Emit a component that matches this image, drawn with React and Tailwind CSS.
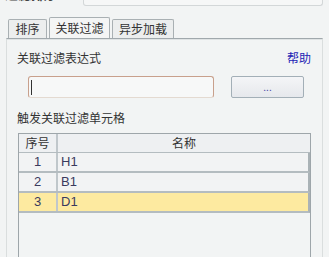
import React from "react";

const rows = [
  { id: 1, name: "H1" },
  { id: 2, name: "B1" },
  { id: 3, name: "D1", selected: true },
];

export default function App() {
  return (
    <div
      className="w-[329px] h-[257px] overflow-hidden bg-[#f2f4f4] text-[12px] text-[#333]"
      style={{ fontFamily: '"Noto Sans CJK SC", "Liberation Sans", sans-serif' }}
    >
      {/* clipped header row */}
      <div className="flex h-[6px] overflow-hidden">
        <div className="w-[83px] pl-[5px] -mt-[14px] leading-[16px] text-[13px] font-bold text-[#444]">
          过滤排序
        </div>
        <div className="w-[240px] h-[6px] border border-t-0 border-[#d3d7d8] rounded-b-[3px] bg-[#f6f7f7]" />
      </div>

      {/* tabs */}
      <div className="mt-[11px] flex items-end gap-[2px] pl-[8px] h-[21px]">
        <div className="w-[39px] h-[19px] flex items-center justify-center border border-b-0 border-[#a9b0b3] rounded-t-[2px] bg-[#eceeee]">
          排序
        </div>
        <div className="w-[61px] h-[21px] flex items-center justify-center border border-b-0 border-[#a9b0b3] rounded-t-[2px] bg-[#f4f5f5]">
          关联过滤
        </div>
        <div className="w-[62px] h-[19px] flex items-center justify-center border border-b-0 border-[#a9b0b3] rounded-t-[2px] bg-[#eceeee]">
          异步加载
        </div>
      </div>

      {/* panel */}
      <div className="ml-[6px] w-[317px] h-[230px] border-t border-t-[#a0a8ac] border-x border-x-[#dadede] shadow-[inset_0_1px_0_#dfe3e4] pt-[11px] pl-[10px] pr-[11px]">
        <div className="flex justify-between leading-[16px]">
          <span>关联过滤表达式</span>
          <span className="text-[#2424b4]">帮助</span>
        </div>

        <div className="mt-[10px] flex items-center">
          <div className="ml-[11px] w-[186px] h-[22px] border border-[#c8a08c] border-b-[#e4dad1] rounded-[3px] bg-[#f7f8f8] flex items-center pl-[2px]">
            <span className="w-px h-[15px] bg-[#333]" />
          </div>
          <div className="ml-[17px] w-[73px] h-[22px] border border-[#a3afb7] rounded-[2px] bg-gradient-to-b from-[#f4f5f7] to-[#e6e8ec] flex items-center justify-center text-[10px] leading-none text-[#4a4aa8]">
            ...
          </div>
        </div>

        <div className="mt-[12px] leading-[16px]">触发关联过滤单元格</div>

        <div className="mt-[7px] ml-[1px] w-[293px] h-[140px] border border-[#9ea6aa]">
          <div className="flex h-[19px] bg-[#eef0f2] border-b border-[#b4bcc0]">
            <div className="w-[39px] flex items-center justify-center border-r-2 border-[#c0c7cb]">序号</div>
            <div className="flex-1 flex items-center justify-center">名称</div>
          </div>
          {rows.map((r) => (
            <div
              key={r.id}
              className={
                "flex h-[20px] border-b-2 border-b-[#b4bcc0] border-r-2 border-r-[#aab2b6] " +
                (r.selected ? "bg-[#fdeaa0]" : "bg-[#f2f3f4]")
              }
              style={{ fontFamily: '"Liberation Sans", sans-serif' }}
            >
              <div className="w-[39px] flex items-center justify-center border-r-2 border-[#c0c7cb] text-[#3a3a5e] text-[13px]">
                {r.id}
              </div>
              <div className="flex-1 flex items-center pl-[3px] text-[#3a3a5e] text-[13px]">{r.name}</div>
            </div>
          ))}
        </div>
      </div>
    </div>
  );
}
